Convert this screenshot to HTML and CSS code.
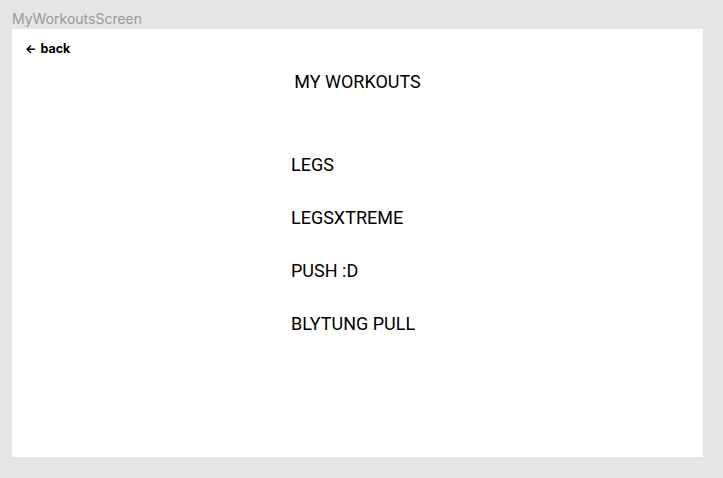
FILE: index.html
```html
<!DOCTYPE html>
<html>
<head>
<meta charset="utf-8">
<link rel="stylesheet" href="styles.css">
</head>
<body>
<div class="page">
  <div class="screen-label">MyWorkoutsScreen</div>
  <div class="frame">
    <div class="back"><span class="arrow">←</span><span>back</span></div>
    <h1 class="title">MY WORKOUTS</h1>
    <ul class="list">
      <li>LEGS</li>
      <li>LEGSXTREME</li>
      <li>PUSH :D</li>
      <li>BLYTUNG PULL</li>
    </ul>
  </div>
</div>
</body>
</html>
```
FILE: styles.css
```css
html, body {
  margin: 0;
  padding: 0;
  background: #e5e5e5;
}
.page {
  width: 723px;
  height: 478px;
  padding: 0 0 0 12px;
  box-sizing: border-box;
}
.screen-label {
  font-family: Inter, "Liberation Sans", sans-serif;
  font-size: 14px;
  color: #9a9a9a;
  height: 29px;
  line-height: 17px;
  padding-top: 10px;
  box-sizing: border-box;
}
.frame {
  width: 691px;
  height: 428px;
  background: #fff;
  display: flex;
  flex-direction: column;
}
.back {
  font-family: Inter, "Liberation Sans", sans-serif;
  font-weight: 700;
  font-size: 12.5px;
  color: #000;
  padding: 12px 0 0 13px;
  line-height: 15px;
  display: flex;
  gap: 4px;
  align-items: center;
}
.arrow {
  font-weight: 700;
  font-size: 12px;
}
.title {
  margin: 0;
  font-family: Roboto, "Liberation Sans", sans-serif;
  font-weight: 400;
  font-size: 18px;
  line-height: 21px;
  text-align: center;
  padding-top: 15px;
  color: #000;
}
.list {
  list-style: none;
  margin: 0;
  padding: 62px 0 0 279px;
  font-family: Roboto, "Liberation Sans", sans-serif;
  font-size: 18px;
  line-height: 21px;
  color: #000;
  display: flex;
  flex-direction: column;
  gap: 32px;
}
```
